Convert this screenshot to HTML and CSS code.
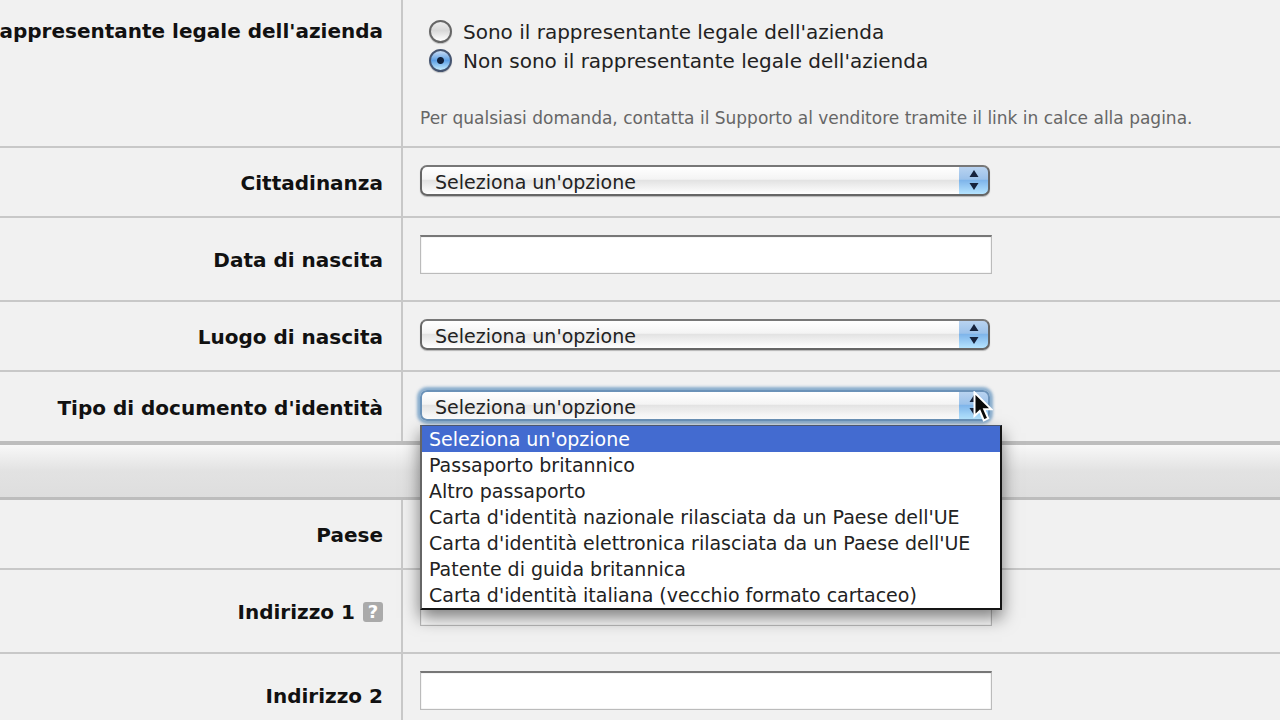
FILE: index.html
```html
<!DOCTYPE html>
<html lang="it">
<head>
    <meta charset="UTF-8">
    <meta name="viewport" content="width=device-width, initial-scale=1.0">
    <title>Rappresentante legale</title>
    <link rel="stylesheet" href="styles.css">
</head>
<body>
    <form class="form">
        <div class="row row-top" role="radiogroup" aria-labelledby="rappresentante">
            <div class="label" id="rappresentante">Rappresentante legale dell'azienda</div>
            <div class="field">
                <label class="radio"><input type="radio" name="legale"> Sono il rappresentante legale dell'azienda</label>
                <label class="radio"><input type="radio" name="legale" checked> Non sono il rappresentante legale dell'azienda</label>
                <p class="hint">Per qualsiasi domanda, contatta il Supporto al venditore tramite il link in calce alla pagina.</p>
            </div>
        </div>
        <div class="row">
            <label class="label" for="cittadinanza">Cittadinanza</label>
            <div class="field">
                <div class="select">
                    <select id="cittadinanza"><option>Seleziona un'opzione</option></select>
                    <svg class="arrows" viewBox="0 0 10 20"><path d="M5 0l4.5 7h-9zM5 20l4.5-7h-9z"/></svg>
                </div>
            </div>
        </div>
        <div class="row">
            <label class="label" for="nascita">Data di nascita</label>
            <div class="field"><input class="text" type="text" id="nascita"></div>
        </div>
        <div class="row">
            <label class="label" for="luogo">Luogo di nascita</label>
            <div class="field">
                <div class="select">
                    <select id="luogo"><option>Seleziona un'opzione</option></select>
                    <svg class="arrows" viewBox="0 0 10 20"><path d="M5 0l4.5 7h-9zM5 20l4.5-7h-9z"/></svg>
                </div>
            </div>
        </div>
        <div class="row row-last">
            <label class="label" for="documento">Tipo di documento d'identità</label>
            <div class="field">
                <div class="select open">
                    <select id="documento"><option>Seleziona un'opzione</option></select>
                    <svg class="arrows" viewBox="0 0 10 20"><path d="M5 0l4.5 7h-9zM5 20l4.5-7h-9z"/></svg>
                    <ul class="menu" role="listbox" aria-label="Tipo di documento d'identità">
                        <li class="active" role="option" aria-selected="true">Seleziona un'opzione</li>
                        <li role="option">Passaporto britannico</li>
                        <li role="option">Altro passaporto</li>
                        <li role="option">Carta d'identità nazionale rilasciata da un Paese dell'UE</li>
                        <li role="option">Carta d'identità elettronica rilasciata da un Paese dell'UE</li>
                        <li role="option">Patente di guida britannica</li>
                        <li role="option">Carta d'identità italiana (vecchio formato cartaceo)</li>
                    </ul>
                    <svg class="cursor" viewBox="0 0 20 31"><path d="M1.5 1.5v23.5l5.3-5 4 9.3 4.4-2-4-9h7.300z"/></svg>
                </div>
            </div>
        </div>
        <div class="band"></div>
        <div class="row">
            <label class="label" for="paese">Paese</label>
            <div class="field">
                <div class="select">
                    <select id="paese"><option>Seleziona un'opzione</option></select>
                    <svg class="arrows" viewBox="0 0 10 20"><path d="M5 0l4.5 7h-9zM5 20l4.5-7h-9z"/></svg>
                </div>
            </div>
        </div>
        <div class="row">
            <div class="label">
                <label for="indirizzo1">Indirizzo 1</label>
                <button class="help" type="button">?</button>
            </div>
            <div class="field"><input class="text" type="text" id="indirizzo1"></div>
        </div>
        <div class="row">
            <label class="label" for="indirizzo2">Indirizzo 2</label>
            <div class="field"><input class="text" type="text" id="indirizzo2"></div>
        </div>
    </form>
</body>
</html>
```
FILE: styles.css
```css
:root {
    --bg: #f1f1f1;
    --line: #c8c8c8;
    --text: #222;
}

* {
    margin: 0;
    padding: 0;
    box-sizing: border-box;
}

body {
    background: var(--bg);
    color: var(--text);
    font: 20px/26px Verdana, "DejaVu Sans", sans-serif;
    overflow-x: hidden;
}

.row {
    display: grid;
    grid-template-columns: 403px minmax(0, 1fr);
    border-bottom: 2px solid var(--line);
}

.row-last {
    border-bottom: 4px solid #bdbdbd;
}

.label {
    display: flex;
    align-items: center;
    justify-content: flex-end;
    gap: 8px;
    padding: 2px 18px 0 0;
    border-right: 2px solid var(--line);
    font-weight: bold;
    color: #111;
    white-space: nowrap;
    overflow: hidden;
}

.label label {
    padding: 0;
}

.field {
    padding: 17px 17px 20px;
}

.field:has(.text) {
    padding-bottom: 26px;
}

.row-last .field {
    padding-top: 18px;
}

.row-top .label {
    align-items: flex-start;
    padding-top: 18px;
}

.row-top .field {
    padding-bottom: 15px;
}

/* radios */
.radio {
    display: flex;
    align-items: center;
    gap: 11px;
    height: 29px;
    padding-left: 9px;
}

.radio input {
    appearance: none;
    width: 23px;
    height: 23px;
    border: 2px solid #666;
    border-radius: 50%;
    background: linear-gradient(#eee, #d8d8d8 45%, #fff);
    box-shadow: 0 1px 1px rgba(0, 0, 0, 0.2);
}

.radio input:checked {
    border-color: #45546f;
    background:
        radial-gradient(circle, #10213c 3px, transparent 4px),
        linear-gradient(#c8dcf5, #5c9fe4 50%, #c4ecff);
}

.hint {
    margin-top: 30px;
    font-size: 17px;
    color: #666;
}

/* selects */
.select {
    position: relative;
    max-width: 570px;
}

.select select {
    display: block;
    appearance: none;
    width: 100%;
    height: 31px;
    padding: 2px 40px 0 13px;
    border: 2px solid #666;
    border-top-color: #777;
    border-radius: 7px;
    background:
        linear-gradient(#b9d3f0, #9cc2ea 45%, #7fb5ea 50%, #b5e4ff) right / 29px 100% no-repeat,
        linear-gradient(#fff, #f4f4f4 45%, #e3e3e3 50%, #fff);
    box-shadow: 0 1px 1px rgba(0, 0, 0, 0.25);
    font: inherit;
    font-size: 19px;
    color: var(--text);
}

.arrows {
    position: absolute;
    top: 5px;
    right: 11px;
    width: 10px;
    height: 20px;
    fill: #16233d;
    pointer-events: none;
}

.open select {
    border-color: #6b92b8;
    box-shadow: 0 0 3px 3px rgba(110, 155, 195, 0.8);
}

.menu {
    position: absolute;
    z-index: 1;
    top: 35px;
    left: 0;
    width: 582px;
    border: solid #151515;
    border-width: 1px 2px 2px;
    border-color: #4a566e #151515 #151515 #666;
    background: #fff;
    box-shadow: 0 8px 16px rgba(0, 0, 0, 0.5);
    list-style: none;
    font-size: 19px;
}

.menu li {
    padding-left: 7px;
}

.menu .active {
    background: #436bd0;
    color: #fff;
}

.cursor {
    position: absolute;
    z-index: 2;
    top: 1px;
    right: -3px;
    width: 20px;
    height: 31px;
    fill: #0a0a0a;
    stroke: #fff;
    stroke-width: 2;
}

/* text boxes */
.text {
    display: block;
    width: 100%;
    max-width: 572px;
    height: 39px;
    padding: 0 8px;
    border: 1px solid #bbb;
    border-top: 2px solid #777;
    background: #fff;
    box-shadow: inset 0 0 1px rgba(0, 0, 0, 0.4);
    font: inherit;
}

.help {
    width: 20px;
    height: 20px;
    border: 0;
    border-radius: 3px;
    background: #aaa;
    color: #fff;
    font: bold 18px/20px Verdana, "DejaVu Sans", sans-serif;
}

.band {
    height: 55px;
    border-bottom: 3px solid #bdbdbd;
    background: linear-gradient(#f8f8f8, #e2e2e2 50%, #dedede);
}
```
